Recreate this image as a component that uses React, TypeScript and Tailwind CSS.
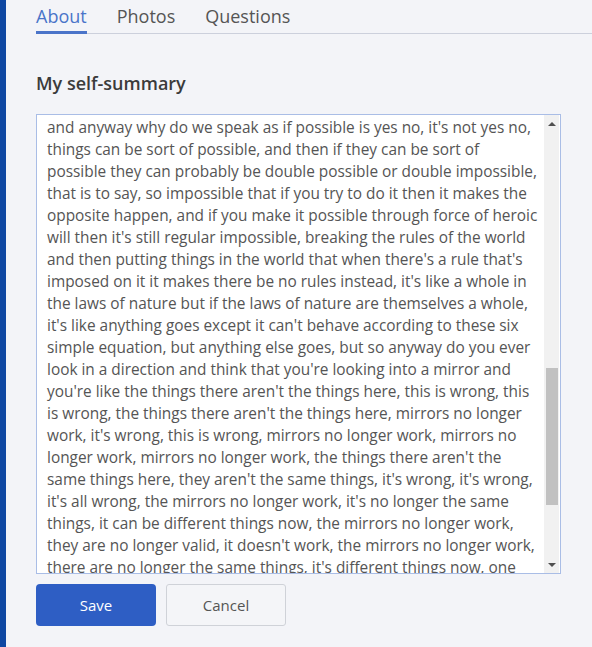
import React from "react";

const lines = [
  "but you can't really say if it's possible or not possible, as if it is,",
  "and anyway why do we speak as if possible is yes no, it's not yes no,",
  "things can be sort of possible, and then if they can be sort of",
  "possible they can probably be double possible or double impossible,",
  "that is to say, so impossible that if you try to do it then it makes the",
  "opposite happen, and if you make it possible through force of heroic",
  "will then it's still regular impossible, breaking the rules of the world",
  "and then putting things in the world that when there's a rule that's",
  "imposed on it it makes there be no rules instead, it's like a whole in",
  "the laws of nature but if the laws of nature are themselves a whole,",
  "it's like anything goes except it can't behave according to these six",
  "simple equation, but anything else goes, but so anyway do you ever",
  "look in a direction and think that you're looking into a mirror and",
  "you're like the things there aren't the things here, this is wrong, this",
  "is wrong, the things there aren't the things here, mirrors no longer",
  "work, it's wrong, this is wrong, mirrors no longer work, mirrors no",
  "longer work, mirrors no longer work, the things there aren't the",
  "same things here, they aren't the same things, it's wrong, it's wrong,",
  "it's all wrong, the mirrors no longer work, it's no longer the same",
  "things, it can be different things now, the mirrors no longer work,",
  "they are no longer valid, it doesn't work, the mirrors no longer work,",
  "there are no longer the same things, it's different things now, one",
];

export default function App() {
  return (
    <div
      className="flex min-h-[647px] bg-[#f3f4f8]"
      style={{ fontFamily: '"Open Sans", "Noto Sans", sans-serif' }}
    >
      <div className="w-[6px] shrink-0 bg-[#0e47a2]" />
      <div className="flex-1 pl-[30px]">
        <div className="flex gap-[30px] border-b border-[#ccd0dc] h-[34px]">
          <div className="relative text-[18px] leading-[32px] text-[#4a74c9]">
            About
            <div className="absolute left-0 right-0 bottom-[-1px] h-[3px] bg-[#4a74c9]" />
          </div>
          <div className="text-[18px] leading-[32px] text-[#555]">Photos</div>
          <div className="text-[18px] leading-[32px] text-[#555]">Questions</div>
        </div>
        <div className="mt-[37px] text-[18px] font-semibold leading-[24px] text-[#3b3b3b]">
          My self-summary
        </div>
        <div className="mt-[19px] w-[525px] h-[460px] border border-[#a9bde6] bg-white flex overflow-hidden">
          <div className="flex-1 overflow-hidden pl-[10px]">
            <div className="mt-[-20px] text-[15.4px] leading-[22px] text-[#555]">
              {lines.map((l, i) => (
                <div key={i} className="whitespace-nowrap">
                  {l}
                </div>
              ))}
            </div>
          </div>
          <div className="w-[15px] shrink-0 bg-[#f1f1f1] flex flex-col items-center mr-[1px]">
            <div className="h-[17px] flex items-center justify-center">
              <div className="w-0 h-0 border-l-[4px] border-r-[4px] border-b-[4px] border-l-transparent border-r-transparent border-b-[#505050]" />
            </div>
            <div className="mt-[236px] w-[12px] h-[137px] bg-[#c1c1c1]" />
            <div className="flex-1" />
            <div className="h-[17px] flex items-center justify-center">
              <div className="w-0 h-0 border-l-[4px] border-r-[4px] border-t-[4px] border-l-transparent border-r-transparent border-t-[#505050]" />
            </div>
          </div>
        </div>
        <div className="mt-[10px] flex gap-[10px]">
          <button className="w-[120px] h-[42px] rounded-[4px] bg-[#2e5ec4] text-white text-[15px]">
            Save
          </button>
          <button className="w-[120px] h-[42px] rounded-[3px] border border-[#cfd2d8] bg-[#f4f5f8] text-[#555] text-[15px]">
            Cancel
          </button>
        </div>
      </div>
    </div>
  );
}
